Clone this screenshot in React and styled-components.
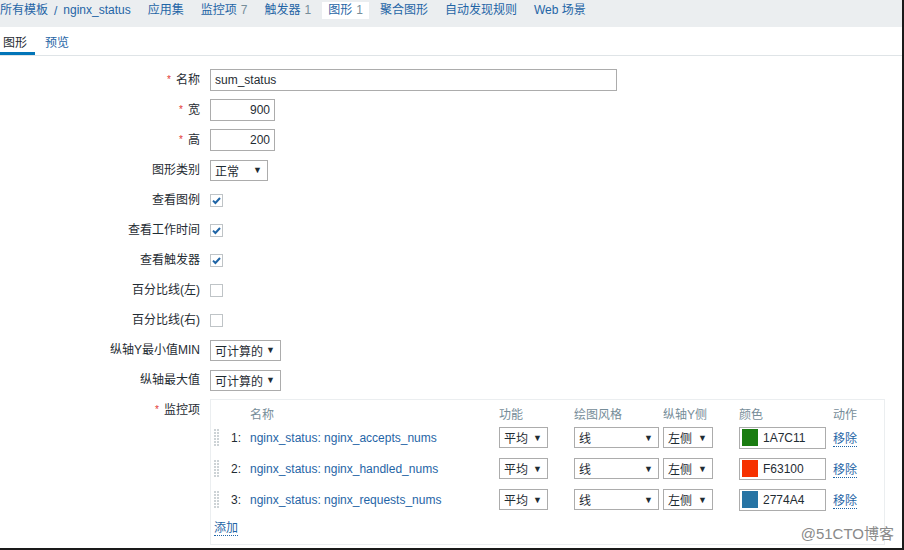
import React from "react";
import styled, { createGlobalStyle } from "styled-components";

const GlobalStyle = createGlobalStyle`
  html, body {
    margin: 0;
    padding: 0;
    background: #fff;
  }
  body {
    font-family: "Liberation Sans", Arial, "Noto Sans CJK SC", sans-serif;
    font-size: 12px;
    color: #1f2c33;
  }
`;

const nav = [
  { label: "应用集" },
  { label: "监控项", count: 7 },
  { label: "触发器", count: 1 },
  { label: "图形", count: 1, active: true },
  { label: "聚合图形" },
  { label: "自动发现规则" },
  { label: "Web 场景" },
];

const items = [
  { n: 1, name: "nginx_status: nginx_accepts_nums", color: "#1A7C11", hex: "1A7C11" },
  { n: 2, name: "nginx_status: nginx_handled_nums", color: "#F63100", hex: "F63100" },
  { n: 3, name: "nginx_status: nginx_requests_nums", color: "#2774A4", hex: "2774A4" },
];

function Graph() {
  return (
    <Page>
      <GlobalStyle />
      <TopBar>
        <Crumbs>
          <NavLink>所有模板</NavLink>
          <Sep>/</Sep>
          <NavLink>nginx_status</NavLink>
        </Crumbs>
        {nav.map((it) => (
          <NavItem key={it.label} active={it.active}>
            {it.label}
            {it.count != null && <Count>{it.count}</Count>}
          </NavItem>
        ))}
      </TopBar>

      <Tabs>
        <Tab active>图形</Tab>
        <Tab>预览</Tab>
      </Tabs>

      <Form>
        <Row>
          <Label required>名称</Label>
          <TextInput width={407}>sum_status</TextInput>
        </Row>
        <Row>
          <Label required>宽</Label>
          <TextInput width={65} right>900</TextInput>
        </Row>
        <Row>
          <Label required>高</Label>
          <TextInput width={65} right>200</TextInput>
        </Row>
        <Row>
          <Label>图形类别</Label>
          <Select width={58} value="正常" />
        </Row>
        <Row>
          <Label>查看图例</Label>
          <Checkbox checked />
        </Row>
        <Row>
          <Label>查看工作时间</Label>
          <Checkbox checked />
        </Row>
        <Row>
          <Label>查看触发器</Label>
          <Checkbox checked />
        </Row>
        <Row>
          <Label>百分比线(左)</Label>
          <Checkbox />
        </Row>
        <Row>
          <Label>百分比线(右)</Label>
          <Checkbox />
        </Row>
        <Row>
          <Label>纵轴Y最小值MIN</Label>
          <Select width={71} value="可计算的" />
        </Row>
        <Row>
          <Label>纵轴最大值</Label>
          <Select width={71} value="可计算的" />
        </Row>
        <Row top>
          <Label required>监控项</Label>
          <ItemsBox>
            <HeadRow>
              <span />
              <span />
              <span>名称</span>
              <span>功能</span>
              <span>绘图风格</span>
              <span>纵轴Y侧</span>
              <span>颜色</span>
              <span>动作</span>
            </HeadRow>
            {items.map((it) => (
              <ItemRow key={it.n}>
                <DragHandle />
                <Num>{it.n}:</Num>
                <ItemLink>{it.name}</ItemLink>
                <Select width={49} value="平均" />
                <Select width={85} value="线" />
                <Select width={50} value="左侧" />
                <ColorField>
                  <Swatch style={{ background: it.color }} />
                  {it.hex}
                </ColorField>
                <span>
                  <ActionLink>移除</ActionLink>
                </span>
              </ItemRow>
            ))}
            <AddRow>
              <ActionLink>添加</ActionLink>
            </AddRow>
          </ItemsBox>
        </Row>
      </Form>

      <Watermark>@51CTO博客</Watermark>
    </Page>
  );
}

function Label({ required, children }) {
  return (
    <LabelCell>
      {required && <Star>*</Star>}
      {children}
    </LabelCell>
  );
}

function Select({ width, value }) {
  return (
    <SelectBox width={width}>
      <span>{value}</span>
      <Arrow>▼</Arrow>
    </SelectBox>
  );
}

function Checkbox({ checked }) {
  return (
    <CheckBox>
      {checked && (
        <svg width="11" height="11" viewBox="0 0 11 11">
          <path d="M2 5.6 L4.4 8 L9 3" fill="none" stroke="#1f65a6" strokeWidth="2" />
        </svg>
      )}
    </CheckBox>
  );
}

function DragHandle() {
  const dots = [];
  for (let r = 0; r < 6; r++) {
    for (let c = 0; c < 2; c++) {
      dots.push(<rect key={r + "-" + c} x={c * 3} y={r * 3} width="2" height="2" fill="#cdd3d6" />);
    }
  }
  return (
    <Handle>
      <svg width="5" height="17" viewBox="0 0 5 17">
        {dots}
      </svg>
    </Handle>
  );
}

const Page = styled.div`
  position: relative;
  width: 904px;
  height: 550px;
  box-sizing: border-box;
  border-right: 2px solid #1a1a1a;
  border-bottom: 2px solid #1a1a1a;
  overflow: hidden;
`;

const TopBar = styled.div`
  display: flex;
  align-items: center;
  gap: 5px;
  height: 27px;
  box-sizing: border-box;
  padding: 2px 0 8px;
  background: #ebeef0;
`;

const Crumbs = styled.div`
  display: flex;
  align-items: center;
  margin-right: 6px;
`;

const NavLink = styled.span`
  color: #1f65a6;
  line-height: 17px;
`;

const Sep = styled.span`
  color: #1f65a6;
  margin: 0 6px;
`;

const NavItem = styled.span`
  color: #1f65a6;
  line-height: 17px;
  padding: 0 6px;
  background: ${(p) => (p.active ? "#fff" : "transparent")};
`;

const Count = styled.span`
  color: #768d99;
  margin-left: 4px;
`;

const Tabs = styled.div`
  display: flex;
  gap: 7px;
  height: 29px;
  box-sizing: border-box;
  border-bottom: 1px solid #dfe4e7;
`;

const Tab = styled.span`
  height: 28px;
  box-sizing: border-box;
  padding: 6px 8px 0 3px;
  color: ${(p) => (p.active ? "#1f2c33" : "#1f65a6")};
  border-bottom: 3px solid ${(p) => (p.active ? "#0275b8" : "transparent")};
`;

const Form = styled.div`
  display: flex;
  flex-direction: column;
  gap: 8px;
  padding-top: 13px;
`;

const Row = styled.div`
  display: flex;
  align-items: ${(p) => (p.top ? "flex-start" : "center")};
  gap: 10px;
  min-height: 22px;
`;

const LabelCell = styled.div`
  width: 200px;
  flex: none;
  text-align: right;
  line-height: 22px;
  ${"" /* labels stay right-aligned against the field column */}
`;

const Star = styled.span`
  color: #e33734;
  font-size: 10px;
  margin-right: 5px;
  vertical-align: top;
`;

const TextInput = styled.div`
  width: ${(p) => p.width}px;
  height: 22px;
  box-sizing: border-box;
  border: 1px solid #acacac;
  padding: 0 4px;
  line-height: 20px;
  font-size: 12px;
  text-align: ${(p) => (p.right ? "right" : "left")};
`;

const SelectBox = styled.div`
  display: flex;
  align-items: center;
  justify-content: space-between;
  width: ${(p) => p.width}px;
  height: 21px;
  box-sizing: border-box;
  border: 1px solid #acacac;
  padding: 0 5px 0 4px;
  background: #fff;
  white-space: nowrap;
`;

const Arrow = styled.span`
  font-size: 9px;
  color: #1f2c33;
`;

const CheckBox = styled.span`
  display: flex;
  align-items: center;
  justify-content: center;
  width: 13px;
  height: 13px;
  box-sizing: border-box;
  border: 1px solid #bfc4c7;
  background: #fff;
`;

const ItemsBox = styled.div`
  width: 675px;
  height: 146px;
  box-sizing: border-box;
  border: 1px solid #ebeef0;
  padding: 4px 0 4px 3px;
`;

const columns = "17px 19px 249px 75px 89px 76px 94px 1fr";

const HeadRow = styled.div`
  display: grid;
  grid-template-columns: ${columns};
  height: 18px;
  align-items: center;
  color: #768d99;
`;

const ItemRow = styled.div`
  display: grid;
  grid-template-columns: ${columns};
  height: 31px;
  align-items: center;
`;

const Handle = styled.span`
  display: flex;
  align-items: center;
`;

const Num = styled.span`
  color: #1f2c33;
`;

const ItemLink = styled.span`
  color: #1f65a6;
`;

const ColorField = styled.div`
  display: flex;
  align-items: center;
  gap: 5px;
  width: 87px;
  height: 22px;
  box-sizing: border-box;
  border: 1px solid #acacac;
  padding: 0 2px;
`;

const Swatch = styled.span`
  width: 16px;
  height: 17px;
`;

const ActionLink = styled.span`
  color: #1f65a6;
  border-bottom: 1px dotted #1f65a6;
`;

const AddRow = styled.div`
  height: 24px;
  display: flex;
  align-items: center;
`;

const Watermark = styled.div`
  position: absolute;
  right: 8px;
  bottom: 5px;
  font-size: 15px;
  color: #8a8a8a;
  font-family: "Liberation Sans", "Noto Sans CJK SC", sans-serif;
`;

export default Graph;
